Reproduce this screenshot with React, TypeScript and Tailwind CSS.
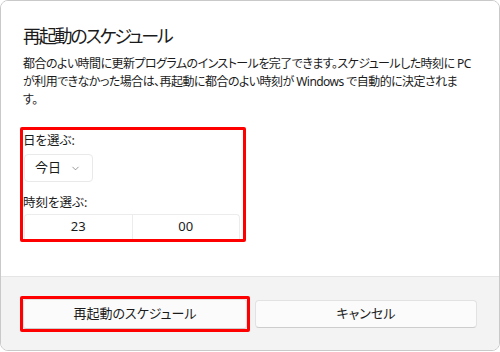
import { ChevronDown } from 'lucide-react';

const font = "font-['Noto_Sans','Noto_Sans_CJK_JP',sans-serif] [font-feature-settings:'palt']";

function TimeCell({ value }: { value: string }) {
  return (
    <div className="flex-1 flex items-center justify-center text-[13px] text-[#1b1b1b]">
      {value}
    </div>
  );
}

export default function App() {
  return (
    <div className={`w-[500px] h-[351px] bg-white ${font}`}>
      <div className="w-full h-full border border-[#c9c9c9] rounded-[8px] overflow-hidden flex flex-col">
        <div className="flex-1 bg-white px-[19px] pt-[22px]">
          <h1 className="pl-[3px] text-[18px] leading-[26px] tracking-[-2.2px] text-[#1b1b1b] font-normal">
            再起動のスケジュール
          </h1>
          <p className="pl-[3px] mt-[6px] text-[12px] leading-[18px] tracking-[-0.55px] text-[#1b1b1b] whitespace-nowrap">
            都合のよい時間に更新プログラムのインストールを完了できます。スケジュールした時刻に&nbsp;PC
            <br />
            が利用できなかった場合は、再起動に都合のよい時刻が&nbsp;Windows&nbsp;で自動的に決定されま
            <br />
            す。
          </p>

          <div className="mt-[18px] w-[226px] border-[3px] border-[#ff0000] rounded-[2px] flex flex-col">
            <div className="text-[12.5px] leading-[18px] text-[#1b1b1b] pt-[2px]">日を選ぶ:</div>
            <div className="ml-[1px] mt-[4px] w-[69px] h-[28px] rounded-[4px] border border-[#e9e9e9] bg-white flex items-center pl-[10px] gap-[9px]">
              <span className="text-[13px] text-[#1b1b1b]">今日</span>
              <ChevronDown className="w-[11px] h-[11px] text-[#555]" strokeWidth={1.3} />
            </div>
            <div className="mt-[12px] text-[12.5px] leading-[18px] text-[#1b1b1b]">時刻を選ぶ:</div>
            <div className="ml-[1px] mt-[2px] w-[216px] h-[25px] rounded-t-[4px] border border-b-0 border-[#ececec] bg-white flex divide-x divide-[#ececec]">
              <TimeCell value="23" />
              <TimeCell value="00" />
            </div>
          </div>
        </div>

        <div className="h-[74px] bg-[#f3f3f3] border-t border-[#e5e5e5] pl-[19px] flex items-center gap-[5px]">
          <div className="w-[230px] h-[36px] border-[3px] border-[#ff0000] rounded-[2px] flex">
            <button className="flex-1 bg-[#fbfbfb] border border-[#e2e2e2] border-b-[#cdcdcd] rounded-[3px] text-[13px] text-[#1b1b1b]">
              再起動のスケジュール
            </button>
          </div>
          <button className="w-[222px] h-[28px] bg-[#fbfbfb] border border-[#e2e2e2] border-b-[#cdcdcd] rounded-[4px] text-[13px] text-[#1b1b1b]">
            キャンセル
          </button>
        </div>
      </div>
    </div>
  );
}
